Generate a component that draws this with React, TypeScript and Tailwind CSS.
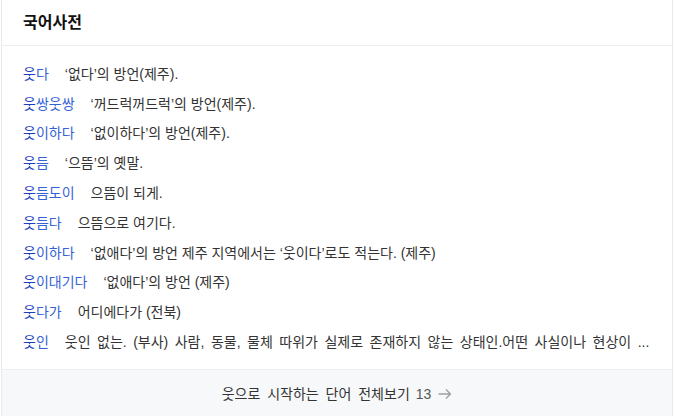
import React from 'react';

const ENTRIES: { rest: string; def: string; wide?: boolean }[] = [
  { rest: '다', def: '‘없다’의 방언(제주).' },
  { rest: '쌍웃쌍', def: '‘꺼드럭꺼드럭’의 방언(제주).' },
  { rest: '이하다', def: '‘없이하다’의 방언(제주).' },
  { rest: '듬', def: '‘으뜸’의 옛말.' },
  { rest: '듬도이', def: '으뜸이 되게.' },
  { rest: '듬다', def: '으뜸으로 여기다.' },
  { rest: '이하다', def: '‘없애다’의 방언 제주 지역에서는 ‘웃이다’로도 적는다. (제주)' },
  { rest: '이대기다', def: '‘없애다’의 방언 (제주)' },
  { rest: '다가', def: '어디에다가 (전북)' },
  {
    rest: '인',
    def: '웃인 없는. (부사) 사람, 동물, 물체 따위가 실제로 존재하지 않는 상태인.어떤 사실이나 현상이 ...',
    wide: true,
  },
];

export default function App() {
  return (
    <div
      className="w-[675px] h-[416px] overflow-hidden bg-white pl-px pr-[2px]"
      style={{ fontFamily: '"Liberation Sans", "Noto Sans CJK KR", sans-serif' }}
    >
      <div className="h-full border-x border-[#e8eaee] flex flex-col">
        {/* Header */}
        <div className="h-[46px] flex items-center px-[21px] border-b border-[#eceef1]">
          <h2 className="text-[16px] font-bold text-[#111]">국어사전</h2>
        </div>

        {/* Entries */}
        <ul className="pt-[13px] pb-[12px] px-[21px]">
          {ENTRIES.map((e, i) => (
            <li key={i} className="h-[29.8px] flex items-center text-[14px] leading-[20px] whitespace-nowrap">
              <span className="shrink-0">
                <span className="text-[#1a3fbf]">웃</span>
                <span className="text-[#3563d6]">{e.rest}</span>
              </span>
              <span
                className={`ml-[16px] text-[#333] overflow-hidden ${e.wide ? '[word-spacing:2.6px]' : ''}`}
              >
                {e.def}
              </span>
            </li>
          ))}
        </ul>

        {/* Footer */}
        <div className="flex-1 bg-[#f7f8fa] border-t border-[#eceef1] flex items-start justify-center pt-[14px]">
          <span className="text-[14px] leading-[20px] text-[#333] flex items-center gap-[6px] [word-spacing:3px]">
            웃으로 시작하는 단어 전체보기
            <span className="text-[#555]">13</span>
            <svg width="15" height="14" viewBox="0 0 15 14" fill="none" stroke="#9aa0a6" strokeWidth="1.3">
              <path d="M1.5 7h12M9 2.5L13.5 7 9 11.5" />
            </svg>
          </span>
        </div>
      </div>
    </div>
  );
}
